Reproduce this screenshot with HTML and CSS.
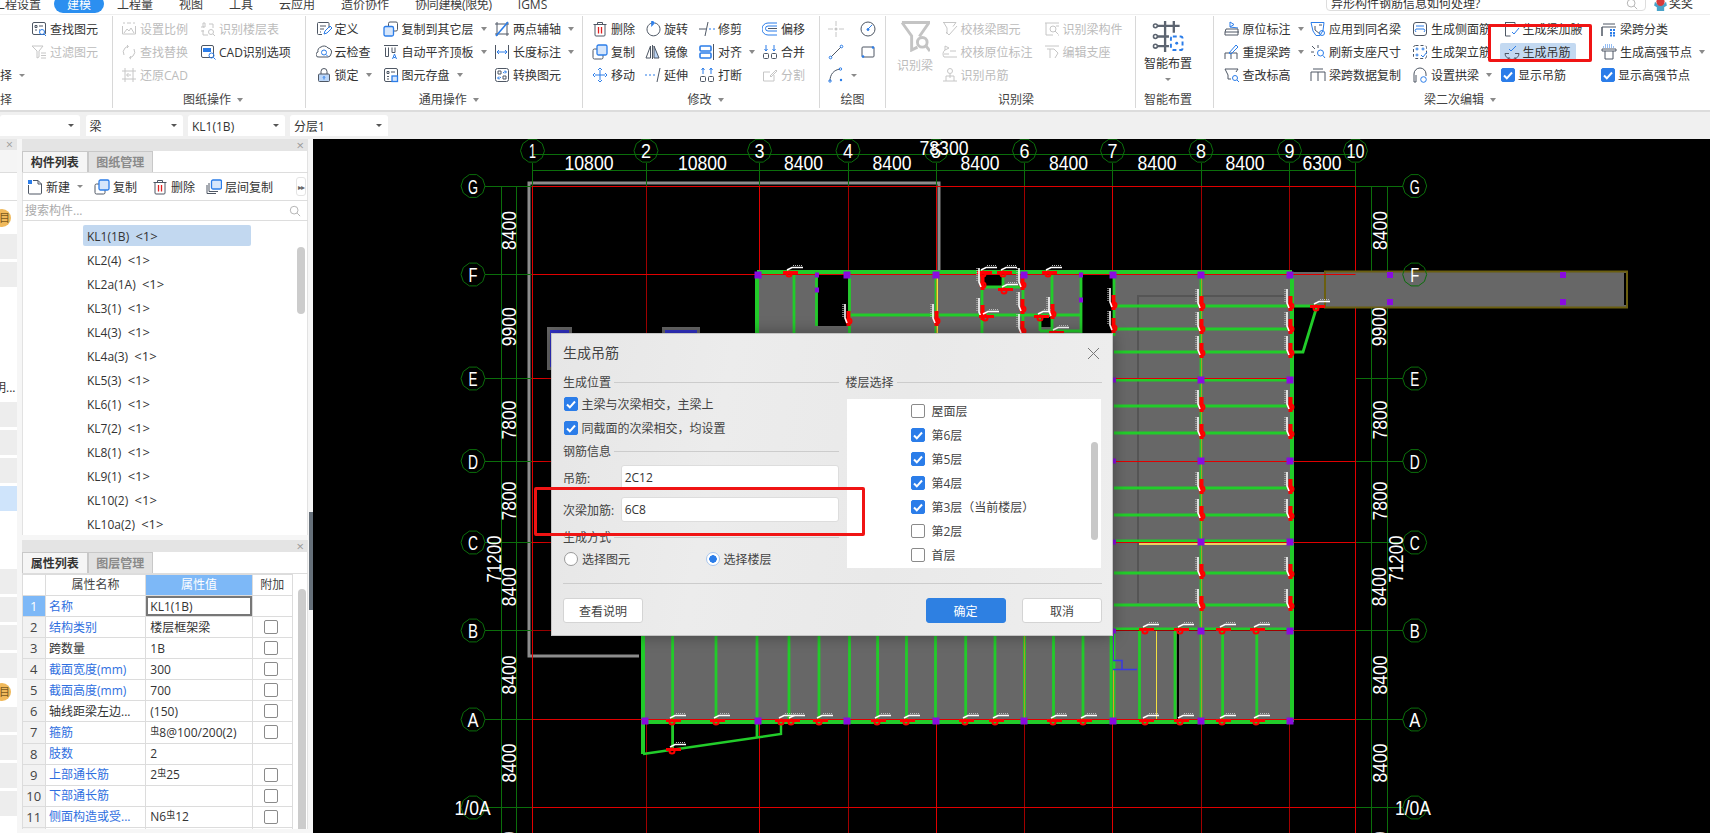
FILE: index.html
```html
<!DOCTYPE html>
<html lang="zh">
<head>
<meta charset="utf-8">
<title>生成吊筋</title>
<link rel="stylesheet" href="styles.css">
</head>
<body>
<svg class="sprite" width="0" height="0" aria-hidden="true">
<defs>
<symbol id="find" viewBox="0 0 16 16"><rect x="1.5" y="1.5" width="13" height="12" rx="1.5"/><path d="M4 4.5h2v2H4zM8 5h4M4 9h2M8 9h1"/><circle class="a" cx="11" cy="11" r="2.5"/><path class="a" d="M13 13l2 2"/></symbol>
<symbol id="filter" viewBox="0 0 16 16"><path d="M1 2h11L8 7v6l-2 1V7zM10 9h5M10 11.500h5M10 14h5"/></symbol>
<symbol id="scale" viewBox="0 0 16 16"><path d="M2 2h2M6 2h4M12 2h2M1.500 5v8h13V5"/><path d="M3 12l3-4 2 2 2-3 3 5"/></symbol>
<symbol id="ftable" viewBox="0 0 16 16"><path d="M3 2h2v4H3zM3 9v5h5M9 3h4v4"/><circle cx="11" cy="11" r="2.500"/><path d="M13 13l2 2M1 6h3M1 10h3"/></symbol>
<symbol id="replace" viewBox="0 0 16 16"><path d="M3 11a6 6 0 0 1 1-7l3-2M13 5a6 6 0 0 1-1 7l-3 2M6 1l1.500 1.500L6 4M10 12l-1.500 2L10 15"/></symbol>
<symbol id="cadopt" viewBox="0 0 16 16"><rect x="1.500" y="1.500" width="12" height="12" rx="1.500"/><path class="af n" d="M3 4h8v4H3z"/><circle class="a" cx="11.500" cy="11.500" r="2.500"/><path class="a" d="M13.500 13.500l2 2"/></symbol>
<symbol id="restore" viewBox="0 0 16 16"><path d="M1 4h14M1 12h14M4 1v14M12 1v14M10 8H6M7.500 6L5.500 8l2 2"/></symbol>
<symbol id="def" viewBox="0 0 16 16"><path d="M13 7V2.500a1 1 0 0 0-1-1H2.500a1 1 0 0 0-1 1v10a1 1 0 0 0 1 1H6M4 5h6M4 8h4M4 11h1"/><path class="a" d="M8 13l1-3 5-5 2 2-5 5z"/></symbol>
<symbol id="cloud" viewBox="0 0 16 16"><path d="M4 13H3a2.500 2.500 0 0 1-1-5 4 4 0 0 1 3-5 5 5 0 0 1 7 1 4 4 0 0 1 3 6 3.500 3.500 0 0 1-3 3z"/><circle class="a" cx="8" cy="8.500" r="2.500"/><path class="a" d="M10 10.500l2 2"/></symbol>
<symbol id="lock" viewBox="0 0 16 16"><path d="M5 7V4.500a3 3 0 0 1 6 0V7"/><rect class="afl" x="2.500" y="7" width="11" height="7.500" rx="1"/><path class="a" d="M8 9.500v3M7 10.500l1-1 1 1"/></symbol>
<symbol id="copylayer" viewBox="0 0 16 16"><rect x="5.500" y="1" width="9" height="9" rx="1.500"/><rect class="afs" x="1" y="5.500" width="9.500" height="9.500" rx="1.500"/></symbol>
<symbol id="topalign" viewBox="0 0 16 16"><path d="M1 1.500h14M2.500 3.500v9h3v-9M9 3.500v5h3v-5"/><path class="a" d="M9.500 15l2-5 2 5M10.500 13.500h2"/></symbol>
<symbol id="save" viewBox="0 0 16 16"><rect x="1.500" y="1.500" width="13" height="13" rx="1.500"/><path d="M4 4.500h2v2H4zM8 5h4M4 9.500h2M4 12h2"/><rect class="afs" x="9" y="9" width="5.500" height="5.500"/></symbol>
<symbol id="twopt" viewBox="0 0 16 16"><path d="M3 1v14M13 1v14M1 3h14M1 13h14"/><path class="a w" d="M2 15L14 1"/></symbol>
<symbol id="dim" viewBox="0 0 16 16"><path d="M1.500 1v14M14.500 1v14"/><path class="a" d="M3 8h10M5 6L3 8l2 2M11 6l2 2-2 2"/></symbol>
<symbol id="convert" viewBox="0 0 16 16"><rect x="1.500" y="1.500" width="13" height="13" rx="2"/><path d="M4 4h3v3H4zM9 9h3v3H9z"/><path class="a" d="M9 6a2.500 2.500 0 0 1 3-1M7 10a2.500 2.500 0 0 1-3 1M11 3.500L12.500 5 11 6.500M5 9.500L3.500 11 5 12.500"/></symbol>
<symbol id="trash" viewBox="0 0 16 16"><path d="M1.500 3.500h13M5.500 3.500V1.500h5v2M3 3.500V14a1 1 0 0 0 1 1h8a1 1 0 0 0 1-1V3.500"/><path class="r" d="M6.500 6v6.500M9.500 6v6.500"/></symbol>
<symbol id="copy" viewBox="0 0 16 16"><rect x="1" y="5" width="10" height="10" rx="1.500"/><rect class="afs" x="5" y="1" width="10" height="10" rx="1.500"/></symbol>
<symbol id="copy2" viewBox="0 0 16 16"><path d="M1 6v8.500h9M3 4v8.500h9"/><rect class="afs" x="5.500" y="1" width="10" height="9" rx="1.500"/></symbol>
<symbol id="move" viewBox="0 0 16 16"><path class="a" d="M8 3v10M3 8h10M6 3l2-2 2 2M6 13l2 2 2-2M3 6L1 8l2 2M13 6l2 2-2 2"/></symbol>
<symbol id="rotate" viewBox="0 0 16 16"><path d="M7 2a6.500 6.500 0 1 0 3 0"/><path class="a w" d="M7 0v4l2-2z"/></symbol>
<symbol id="mirror" viewBox="0 0 16 16"><path d="M5.500 2L1 14h4.500z"/><path class="afl" d="M9 2l5 12H9z"/><path d="M7.500 1v14"/></symbol>
<symbol id="extend" viewBox="0 0 16 16"><path class="a" d="M0 8h2M4 8h2M8 8h2"/><path d="M15 1l-3 14"/></symbol>
<symbol id="trim" viewBox="0 0 16 16"><path d="M9 1L6 15M0 8h7"/><path class="a" d="M10 8h2M14 8h2"/></symbol>
<symbol id="align" viewBox="0 0 16 16"><rect class="a w" x="1" y="2" width="11" height="5" rx="1"/><rect class="a w" x="1" y="9" width="11" height="5" rx="1"/><path d="M14.500 0v16"/></symbol>
<symbol id="breakb" viewBox="0 0 16 16"><rect x="1.500" y="9.500" width="5" height="5" rx="1"/><rect x="9.500" y="9.500" width="5" height="5" rx="1"/><path class="a" d="M4 1v6M12 1v6M2.500 3L4 1l1.500 2M10.500 3L12 1l1.500 2"/></symbol>
<symbol id="offset" viewBox="0 0 16 16"><path class="a" d="M15 2H6a5.500 5.500 0 0 0 0 12h9M15 5H6a2.500 2.500 0 0 0 0 5h9"/><path d="M15 7.500H6"/></symbol>
<symbol id="merge" viewBox="0 0 16 16"><rect x="1.500" y="9.500" width="5" height="5" rx="1"/><rect x="9.500" y="9.500" width="5" height="5" rx="1"/><path class="a" d="M4 1v6M12 1v6M2.500 5L4 7l1.500-2M10.500 5L12 7l1.500-2"/></symbol>
<symbol id="split" viewBox="0 0 16 16"><path d="M12 8v6H1.500V5H8M8 9l6-6 1 1-6 6z"/></symbol>
<symbol id="dotc" viewBox="0 0 16 16"><path d="M8 0v5M8 11v5M0 8h5M11 8h5"/><circle class="af n" cx="8" cy="8" r="1.500"/></symbol>
<symbol id="circ" viewBox="0 0 16 16"><circle cx="8" cy="8" r="7"/><path class="a" d="M8 8l4-4"/><circle class="af" cx="8" cy="8.500" r="1"/></symbol>
<symbol id="lin" viewBox="0 0 16 16"><path d="M3 13L13 3"/><circle class="a" cx="13.500" cy="2.500" r="1.300"/><circle class="a" cx="2.500" cy="13.500" r="1.300"/></symbol>
<symbol id="rct" viewBox="0 0 16 16"><rect x="2" y="3" width="12" height="10" rx="1"/><circle class="af n" cx="13" cy="3.500" r="1.300"/><circle class="af n" cx="3" cy="12.500" r="1.300"/></symbol>
<symbol id="arc" viewBox="0 0 16 16"><path d="M2 14C2 7 6 3 12 2"/><circle class="a" cx="2" cy="14" r="1.200"/><circle class="a" cx="12.500" cy="2" r="1.200"/><circle class="af n" cx="13" cy="13" r="1.200"/></symbol>
<symbol id="bigfilter" viewBox="0 0 30 32"><path class="h" d="M1 1.500h28L19 16M1 1.500l10 14V30l6-3"/><circle class="h" cx="22" cy="22" r="5"/><path class="h" d="M26 26l4 5"/></symbol>
<symbol id="chk1" viewBox="0 0 16 16"><path d="M1 1.500h13l-3 4M2 2l3 5v6"/><path d="M4 11l3 3 8-9"/></symbol>
<symbol id="chk2" viewBox="0 0 16 16"><path d="M3 2v4l4-2zM3 6a5 5 0 0 0-1 7h13M2 10h5M8 7h6"/></symbol>
<symbol id="hang" viewBox="0 0 16 16"><circle cx="8" cy="4" r="2.500"/><path d="M4 14V9h8v5M1 14h14M8 7v4"/></symbol>
<symbol id="part" viewBox="0 0 16 16"><path d="M1 2h14M2 2v12h7"/><circle cx="9" cy="8" r="3"/><path d="M11 10l3 3M12 5h3M14 14h1"/></symbol>
<symbol id="sup" viewBox="0 0 16 16"><path d="M1 2h14M3 5h7M6 5v9M10 5l4 4-3 5"/></symbol>
<symbol id="grid" viewBox="0 0 32 32"><path class="d" d="M3 5h25M3 16h14M3 26h14M13 0v32M22 0v12"/><circle class="d1" cx="3" cy="5" r="2"/><circle class="d1" cx="3" cy="16" r="2"/><circle class="d1" cx="3" cy="26" r="2"/><rect class="a d2" x="19" y="16" width="12" height="14" rx="2" stroke-dasharray="4 3"/><circle class="af n" cx="25" cy="23" r="1.500"/></symbol>
<symbol id="orig" viewBox="0 0 16 16"><path class="a" d="M6 1v5l4-2.500zM6 6l8 1"/><path d="M2 8h12v6H1v-3zM1 11h14"/></symbol>
<symbol id="redo" viewBox="0 0 16 16"><path d="M1 15V9h12v6M7 9v6"/><path class="a" d="M5 9l7-8 2 2-7 7z"/></symbol>
<symbol id="chkh" viewBox="0 0 16 16"><path d="M1 2h13l-2 3M1 2l3 6v4h3"/><circle class="a" cx="11" cy="11" r="2.500"/><path class="a" d="M13 13l2 2"/></symbol>
<symbol id="apply" viewBox="0 0 16 16"><path class="a" d="M1 1.500h13l-1 8-3 5H6L3 10z"/><path d="M5 5v4l5 4M9 4h3"/><circle class="a" cx="12" cy="12" r="2.500"/></symbol>
<symbol id="fresh" viewBox="0 0 16 16"><path d="M2 2l3 3M8 1v3M1 8h3M4 12l1-1"/><circle class="a" cx="10.500" cy="9" r="3"/><path class="a" d="M13 11.500l2 2.500"/></symbol>
<symbol id="scopy" viewBox="0 0 16 16"><path d="M1 5h14M3 2h10M1 14V5M15 14V5M8 5v9"/></symbol>
<symbol id="side" viewBox="0 0 16 16"><rect x="1.500" y="1.500" width="13" height="13" rx="2.500"/><path class="a" d="M4 5h8M4 8h8"/><path class="a" d="M4 8a2 2 0 0 0 0 3M12 8a2 2 0 0 1 0 3"/></symbol>
<symbol id="stand" viewBox="0 0 16 16"><rect x="1.500" y="1.500" width="13" height="13" rx="2" stroke-dasharray="3 2"/><circle class="a" cx="5" cy="5" r="1"/><circle class="a" cx="11" cy="5" r="1"/><circle class="a" cx="5" cy="11" r="1"/><path class="a" d="M9 11l2 2 4-5"/></symbol>
<symbol id="archb" viewBox="0 0 16 16"><path d="M2 15V7a6 6 0 0 1 12 0v2M2 15h2V8"/><circle class="a" cx="11.500" cy="12.500" r="2.800"/></symbol>
<symbol id="haunch" viewBox="0 0 16 16"><path d="M1 1.500h10M1.500 1.500V15h5M11 1.500V6"/><path class="a" d="M8 11l2 2 5-6"/></symbol>
<symbol id="hangb" viewBox="0 0 16 16"><path d="M1 9.500a7 6 0 0 0 14 0M1 9.500h4M11 9.500h4M5 13v2M11 13v2"/><path class="a" d="M5 5l2 2 5-5"/></symbol>
<symbol id="classify" viewBox="0 0 16 16"><path d="M2 3h12M1 15V6h14M1 6v9"/><path class="a d3" d="M9 9h2M12 9h2M9 12h2M12 12h2M9 14.500h2M12 14.500h2"/></symbol>
<symbol id="node" viewBox="0 0 16 16"><path class="a" d="M4 1h8M2 3h12" stroke-dasharray="1 1"/><path d="M1 5h14v2H1zM4 7v8h8V7"/></symbol>
<symbol id="ck" viewBox="0 0 14 14"><path class="ckp" d="M3 7.500l2.800 2.800L11 4.500"/></symbol>
<symbol id="mag" viewBox="0 0 14 14"><circle cx="6" cy="6" r="4.500"/><path d="M9.500 9.500L13 13"/></symbol>
<symbol id="newdoc" viewBox="0 0 16 16"><path d="M6 1.500h5l3.500 3.500v9a1 1 0 0 1-1 1h-11a1 1 0 0 1-1-1V6"/><path d="M11 1.500V5h3.500"/><path class="af n" d="M1 1h4v4H1z"/></symbol>
</defs>
</svg>

<header class="tabbar">
  <div class="tabs">
    <span class="tab">工程设置</span>
    <span class="tab active">建模</span>
    <span class="tab">工程量</span>
    <span class="tab">视图</span>
    <span class="tab">工具</span>
    <span class="tab">云应用</span>
    <span class="tab">造价协作</span>
    <span class="tab tab-long">协同建模(限免)</span>
    <span class="tab">IGMS</span>
  </div>
  <div class="search-top"><span>异形构件钢筋信息如何处理?</span><svg class="ic mag"><use href="#mag"/></svg></div>
  <div class="user">
    <svg class="avatar" viewBox="0 0 14 12"><path class="av-b" d="M1 2l3 3h6l3-3 1 4-3 2v4H3V8L0 6z"/><circle class="av-r" cx="7" cy="2" r="4.500"/></svg>
    <span>奖奖</span>
  </div>
</header>

<section class="ribbon">
  <div class="grp g0">
    <div class="cols">
      <div class="it"></div><div class="it"></div>
      <div class="it"><span>择</span><i class="ar ar-sm"></i></div>
      <div class="it"><svg class="ic"><use href="#find"/></svg><span>查找图元</span></div>
      <div class="it off"><svg class="ic"><use href="#filter"/></svg><span>过滤图元</span></div>
    </div>
    <div class="glabel left">择</div>
  </div>
  <div class="grp g1">
    <div class="cols">
      <div class="it off"><svg class="ic"><use href="#scale"/></svg><span>设置比例</span></div>
      <div class="it off"><svg class="ic"><use href="#replace"/></svg><span>查找替换</span></div>
      <div class="it off"><svg class="ic"><use href="#restore"/></svg><span>还原CAD</span></div>
      <div class="it off"><svg class="ic"><use href="#ftable"/></svg><span>识别楼层表</span></div>
      <div class="it"><svg class="ic"><use href="#cadopt"/></svg><span>CAD识别选项</span></div>
    </div>
    <div class="glabel">图纸操作<i class="ar"></i></div>
  </div>
  <div class="grp g2">
    <div class="cols">
      <div class="it"><svg class="ic"><use href="#def"/></svg><span>定义</span></div>
      <div class="it"><svg class="ic"><use href="#cloud"/></svg><span>云检查</span></div>
      <div class="it"><svg class="ic"><use href="#lock"/></svg><span>锁定</span><i class="ar"></i></div>
      <div class="it"><svg class="ic"><use href="#copylayer"/></svg><span>复制到其它层</span><i class="ar"></i></div>
      <div class="it"><svg class="ic"><use href="#topalign"/></svg><span>自动平齐顶板</span><i class="ar"></i></div>
      <div class="it"><svg class="ic"><use href="#save"/></svg><span>图元存盘</span><i class="ar"></i></div>
      <div class="it"><svg class="ic"><use href="#twopt"/></svg><span>两点辅轴</span><i class="ar"></i></div>
      <div class="it"><svg class="ic"><use href="#dim"/></svg><span>长度标注</span><i class="ar"></i></div>
      <div class="it"><svg class="ic"><use href="#convert"/></svg><span>转换图元</span></div>
    </div>
    <div class="glabel">通用操作<i class="ar"></i></div>
  </div>
  <div class="grp g3">
    <div class="cols">
      <div class="it"><svg class="ic"><use href="#trash"/></svg><span>删除</span></div>
      <div class="it"><svg class="ic"><use href="#copy"/></svg><span>复制</span></div>
      <div class="it"><svg class="ic"><use href="#move"/></svg><span>移动</span></div>
      <div class="it"><svg class="ic"><use href="#rotate"/></svg><span>旋转</span></div>
      <div class="it"><svg class="ic"><use href="#mirror"/></svg><span>镜像</span></div>
      <div class="it"><svg class="ic"><use href="#extend"/></svg><span>延伸</span></div>
      <div class="it"><svg class="ic"><use href="#trim"/></svg><span>修剪</span></div>
      <div class="it"><svg class="ic"><use href="#align"/></svg><span>对齐</span><i class="ar"></i></div>
      <div class="it"><svg class="ic"><use href="#breakb"/></svg><span>打断</span></div>
      <div class="it"><svg class="ic"><use href="#offset"/></svg><span>偏移</span></div>
      <div class="it"><svg class="ic"><use href="#merge"/></svg><span>合并</span></div>
      <div class="it off"><svg class="ic"><use href="#split"/></svg><span>分割</span></div>
    </div>
    <div class="glabel">修改<i class="ar"></i></div>
  </div>
  <div class="grp g4">
    <div class="cols">
      <div class="it off"><svg class="ic"><use href="#dotc"/></svg></div>
      <div class="it"><svg class="ic"><use href="#lin"/></svg></div>
      <div class="it"><svg class="ic"><use href="#arc"/></svg><i class="ar ar-sm"></i></div>
      <div class="it"><svg class="ic"><use href="#circ"/></svg></div>
      <div class="it"><svg class="ic"><use href="#rct"/></svg></div>
    </div>
    <div class="glabel">绘图</div>
  </div>
  <div class="grp g5">
    <div class="cols">
      <div class="big off"><svg class="bigic"><use href="#bigfilter"/></svg><span>识别梁</span></div>
      <div class="it off"><svg class="ic"><use href="#chk1"/></svg><span>校核梁图元</span></div>
      <div class="it off"><svg class="ic"><use href="#chk2"/></svg><span>校核原位标注</span></div>
      <div class="it off"><svg class="ic"><use href="#hang"/></svg><span>识别吊筋</span></div>
      <div class="it off"><svg class="ic"><use href="#part"/></svg><span>识别梁构件</span></div>
      <div class="it off"><svg class="ic"><use href="#sup"/></svg><span>编辑支座</span></div>
    </div>
    <div class="glabel">识别梁</div>
  </div>
  <div class="grp g6">
    <div class="cols">
      <div class="big big-smart"><svg class="bigic"><use href="#grid"/></svg><span>智能布置</span><i class="ar ar-sm"></i></div>
    </div>
    <div class="glabel">智能布置</div>
  </div>
  <div class="grp g7">
    <div class="cols">
      <div class="it"><svg class="ic"><use href="#orig"/></svg><span>原位标注</span><i class="ar"></i></div>
      <div class="it"><svg class="ic"><use href="#redo"/></svg><span>重提梁跨</span><i class="ar"></i></div>
      <div class="it"><svg class="ic"><use href="#chkh"/></svg><span>查改标高</span></div>
      <div class="it"><svg class="ic"><use href="#apply"/></svg><span>应用到同名梁</span></div>
      <div class="it"><svg class="ic"><use href="#fresh"/></svg><span>刷新支座尺寸</span></div>
      <div class="it"><svg class="ic"><use href="#scopy"/></svg><span>梁跨数据复制</span></div>
      <div class="it"><svg class="ic"><use href="#side"/></svg><span>生成侧面筋</span></div>
      <div class="it"><svg class="ic"><use href="#stand"/></svg><span>生成架立筋</span></div>
      <div class="it"><svg class="ic"><use href="#archb"/></svg><span>设置拱梁</span><i class="ar"></i></div>
      <div class="it pad"><svg class="ic"><use href="#haunch"/></svg><span>生成梁加腋</span></div>
      <div class="it pad"><div class="sel-bg"><svg class="ic"><use href="#hangb"/></svg><span>生成吊筋</span></div></div>
      <div class="it pad-cb"><b class="cb on"><svg><use href="#ck"/></svg></b><span>显示吊筋</span></div>
      <div class="it"><svg class="ic"><use href="#classify"/></svg><span>梁跨分类</span></div>
      <div class="it"><svg class="ic"><use href="#node"/></svg><span>生成高强节点</span><i class="ar"></i></div>
      <div class="it"><b class="cb on"><svg><use href="#ck"/></svg></b><span>显示高强节点</span></div>
    </div>
    <div class="glabel g7-label">梁二次编辑<i class="ar"></i></div>
  </div>
</section>

<section class="subbar">
  <div class="combo c1"><span></span><i class="ar ar-dk"></i></div>
  <div class="combo c2"><span>梁</span><i class="ar ar-dk"></i></div>
  <div class="combo c3"><span>KL1(1B)</span><i class="ar ar-dk"></i></div>
  <div class="combo c4"><span>分层1</span><i class="ar ar-dk"></i></div>
</section>

<main class="main">
  <nav class="nav">
    <div class="n-strip">×</div>
    <div class="n-tab"></div>
    <div class="n-tool"></div>
    <div class="n-a"><div class="dot">目</div></div>
    <div class="band"></div>
    <div class="band"></div>
    <div class="n-b"><span>明...</span></div>
    <div class="band"></div>
    <div class="band"></div>
    <div class="band"></div>
    <div class="band band-sel"></div>
    <div class="n-c"></div>
    <div class="band"></div>
    <div class="band"></div>
    <div class="band"></div>
    <div class="band"></div>
    <div class="n-d"><div class="dot">目</div></div>
    <div class="band"></div>
    <div class="band"></div>
    <div class="band"></div>
    <div class="band"></div>
  </nav>

  <div class="panels">
    <section class="panel panel-a">
      <div class="p-strip">×</div>
      <div class="p-tabs"><span class="p-tab on">构件列表</span><span class="p-tab">图纸管理</span></div>
      <div class="p-tools">
        <div class="tb"><svg class="ic"><use href="#newdoc"/></svg><span>新建</span><i class="ar ar-sm"></i></div>
        <div class="tb"><svg class="ic"><use href="#copy"/></svg><span>复制</span></div>
        <div class="tb"><svg class="ic"><use href="#trash"/></svg><span>删除</span></div>
        <div class="tb"><svg class="ic"><use href="#copy2"/></svg><span>层间复制</span></div>
        <div class="more">▸▸</div>
      </div>
      <div class="p-search"><span>搜索构件...</span><svg class="ic mag"><use href="#mag"/></svg></div>
      <div class="p-list">
        <div class="row sel">KL1(1B)  <em>&lt;1&gt;</em></div>
        <div class="row">KL2(4)  <em>&lt;1&gt;</em></div>
        <div class="row">KL2a(1A)  <em>&lt;1&gt;</em></div>
        <div class="row">KL3(1)  <em>&lt;1&gt;</em></div>
        <div class="row">KL4(3)  <em>&lt;1&gt;</em></div>
        <div class="row">KL4a(3)  <em>&lt;1&gt;</em></div>
        <div class="row">KL5(3)  <em>&lt;1&gt;</em></div>
        <div class="row">KL6(1)  <em>&lt;1&gt;</em></div>
        <div class="row">KL7(2)  <em>&lt;1&gt;</em></div>
        <div class="row">KL8(1)  <em>&lt;1&gt;</em></div>
        <div class="row">KL9(1)  <em>&lt;1&gt;</em></div>
        <div class="row">KL10(2)  <em>&lt;1&gt;</em></div>
        <div class="row">KL10a(2)  <em>&lt;1&gt;</em></div>
        <div class="thumb"></div>
      </div>
    </section>
    <section class="panel panel-b">
      <div class="p-strip">×</div>
      <div class="p-tabs"><span class="p-tab on">属性列表</span><span class="p-tab">图层管理</span></div>
      <div class="p-tablewrap">
        <table class="props">
          <colgroup><col class="c-i"><col class="c-n"><col class="c-v"><col class="c-x"></colgroup>
          <tr class="head"><th></th><th>属性名称</th><th class="hv">属性值</th><th>附加</th></tr>
          <tr><td class="idx hv">1</td><td class="bl">名称</td><td class="val focus">KL1(1B)</td><td></td></tr>
          <tr><td class="idx">2</td><td class="bl">结构类别</td><td class="val">楼层框架梁</td><td><b class="cb"></b></td></tr>
          <tr><td class="idx">3</td><td>跨数量</td><td class="val">1B</td><td><b class="cb"></b></td></tr>
          <tr><td class="idx">4</td><td class="bl">截面宽度(mm)</td><td class="val">300</td><td><b class="cb"></b></td></tr>
          <tr><td class="idx">5</td><td class="bl">截面高度(mm)</td><td class="val">700</td><td><b class="cb"></b></td></tr>
          <tr><td class="idx">6</td><td>轴线距梁左边...</td><td class="val">(150)</td><td><b class="cb"></b></td></tr>
          <tr><td class="idx">7</td><td class="bl">箍筋</td><td class="val"><span class="rb">虫</span>8@100/200(2)</td><td><b class="cb"></b></td></tr>
          <tr><td class="idx">8</td><td class="bl">肢数</td><td class="val">2</td><td></td></tr>
          <tr><td class="idx">9</td><td class="bl">上部通长筋</td><td class="val">2<span class="rb">虫</span>25</td><td><b class="cb"></b></td></tr>
          <tr><td class="idx">10</td><td class="bl">下部通长筋</td><td class="val"></td><td><b class="cb"></b></td></tr>
          <tr><td class="idx">11</td><td class="bl">侧面构造或受...</td><td class="val">N6<span class="rb">虫</span>12</td><td><b class="cb"></b></td></tr>
          <tr><td class="idx">12</td><td class="bl">拉筋</td><td class="val">1<span class="rb">虫</span>6</td><td><b class="cb"></b></td></tr>
        </table>
        <div class="track"><div class="track-thumb"></div></div>
      </div>
    </section>
  </div>

  <div class="split"><div class="handle"></div></div>

  <div class="canvas">
    <svg class="cad" viewBox="313 139 1397 694" width="1397" height="694">
      <defs>
        <polygon id="bb" class="bub" points="12,0 9.700,7 3.700,11.400 -3.700,11.400 -9.700,7 -12,0 -9.700,-7 -3.700,-11.400 3.700,-11.400 9.700,-7"/>
        <g id="hb">
          <path class="m-r" d="M-6 1h15v3H-6z"/>
          <circle class="m-ring" cx="0" cy="4" r="2.500"/>
          <path class="m-w" d="M-2 0L3-2.500H14"/>
          <path class="m-t" d="M4-4.500H14"/>
        </g>
        <g id="hv">
          <path class="m-r" d="M-1.500-7h4V8h-4z"/>
          <circle class="m-ring" cx="1" cy="3" r="2.500"/>
          <path class="m-w" d="M-3-14V0L-1 5"/>
          <path class="m-t" d="M-5-14V-1"/>
        </g>
        <rect id="pp" class="pur" x="-3.500" y="-3.500" width="7" height="7"/>
        <rect id="ps" class="pur" x="-2" y="-2.500" width="4" height="5"/>
      </defs>

      <path class="outline" d="M639 656H529V183H939V273"/>
      <path class="blk" d="M547 327h25v40h-25z"/>
      <rect class="blue" x="548.500" y="328.500" width="22" height="40"/>
      <rect class="blue" x="663.500" y="328.500" width="35" height="20"/>

      <!-- grid axes -->
      <path class="ax-g" d="M532 154.500H1355.500M532 170.500H1355.500M532.500 163V186M646.500 163V186M759.500 163V186M848.500 163V186M936.500 163V186M1024.500 163V186M1112.500 163V186M1201.500 163V186M1289.500 163V186M1355.500 163V186"/>
      <path class="ax-g" d="M485 186.500H532M485 274.500H532M485 378.500H532M485 461.500H532M485 542.500H532M485 630.500H532M485 719.500H532M485 807.500H532M1355.500 186.500H1403M1355.500 274.500H1403M1355.500 378.500H1403M1355.500 461.500H1403M1355.500 542.500H1403M1355.500 630.500H1403M1355.500 719.500H1403M1355.500 807.500H1403"/>
      <path class="ax-g" d="M501.500 186V833M516.500 186V833M1371.500 186V833M1387.500 186V833"/>
      <path class="ax-r" d="M532.500 186V833M759.500 186V833M936.500 186V833M1112.500 186V833M1355.500 186V833"/>
      <path class="ax-d" d="M646.500 186V833M848.500 186V833M1024.500 186V833M1201.500 186V833M1289.500 186V833"/>
      <path class="ax-r" d="M532 186.500H1355.500"/>

      <!-- building -->
      <path class="bld" d="M757 272H1292V722H643V600H757z"/>
      <rect class="bld" x="1292" y="272" width="33" height="34"/>
      <rect class="beam" x="1325" y="271.500" width="302" height="36"/>
      <path class="blk" d="M1624 273h2v32h-2z"/>
      <path class="blk" d="M817.500 274H848V326H817.500zM983 274H1003V286.500H983zM1040 317H1051V327H1040zM1081 274H1113V334H1081z"/>
      <path class="dk" d="M1285 296H1138V603"/>
      <path class="ylw" d="M1139 544H1287"/>

      <path class="gr w4" d="M757 272H1292M643 722H1292M757 272V336M1292 272V722M643 636V754"/>
      <path class="gr" d="M794 274V336M816.500 274V326M849.500 274V336M936 274V336M982 274V336M1003 274V287M1023 274V336M1052 274V336M1081 274V336M1114 274V336M1201 274V630M1114 630V720M1201 630V720"/>
      <path class="gr" d="M849 315H1081M982 287H1023M1040 317V331M1040 331H1081"/>
      <path class="gr" d="M1114 306H1320M1114 329H1292M1114 352H1303L1317 306M1114 380H1292M1114 406H1292M1114 433H1292M1114 488H1292M1114 515H1292M1114 541H1292M1114 573H1292M1114 605H1292M1114 629H1292"/>
      <path class="gr" d="M672.600 636V748M716 636V722M757 636V737M789 636V722M819 636V722M849.500 636V722M877.600 636V722M906.500 636V722M935.500 636V722M965.700 636V722M995 636V722M1024.500 636V722M1053.500 636V722M1083 636V722M1111 636V722M1139.500 630V722M1175 630V722M1222.600 630V722M1256.800 630V722"/>
      <path class="gr w2" d="M643 754L781 734V722"/>
      <path class="blk" d="M1177 630h2v90h-2z"/>
      <path class="ylw thin" d="M1156.500 630V720M937.500 274V336"/>
      <path class="org" d="M1113.500 669V720"/>
      <path class="pl" d="M1113.500 630V660"/>
      <path class="bl" d="M1113 660.500H1122V669.500H1113M1122 669.500H1137"/>
      <path class="olv" d="M1201.500 274V722M936.500 274V336M1024.500 636V720M1114 461.500H1292"/>

      <path class="ax-r thin" d="M532 274.500H1355.500M532 378.500H1292M532 461.500H1355.500M532 542.500H1355.500M532 719.500H1355.500M532 807.500H1355.500"/>
      <path class="ax-d" d="M532 630.500H1355.500"/>

      <!-- generated bars -->
      <use href="#hb" x="789" y="270"/><use href="#hb" x="983" y="270"/><use href="#hb" x="1003" y="270"/><use href="#hb" x="1048" y="270"/>
      <use href="#hv" x="982" y="282"/><use href="#hv" x="1022" y="282"/><use href="#hb" x="1004" y="287"/>
      <use href="#hv" x="982" y="312"/><use href="#hb" x="985" y="314"/><use href="#hv" x="1022" y="306"/><use href="#hv" x="1022" y="328"/>
      <use href="#hb" x="1040" y="314"/><use href="#hv" x="1052" y="311"/><use href="#hb" x="1055" y="330"/>
      <use href="#hv" x="848" y="318"/><use href="#hv" x="936" y="318"/>
      <use href="#hv" x="1113" y="302"/><use href="#hv" x="1113" y="325"/><use href="#hb" x="1316" y="304"/>
      <use href="#hv" x="1201" y="303"/><use href="#hv" x="1201" y="326"/><use href="#hv" x="1201" y="350"/><use href="#hv" x="1201" y="404"/><use href="#hv" x="1201" y="431"/><use href="#hv" x="1201" y="486"/><use href="#hv" x="1201" y="513"/><use href="#hv" x="1201" y="571"/><use href="#hv" x="1201" y="603"/>
      <use href="#hv" x="1290" y="303"/><use href="#hv" x="1290" y="326"/><use href="#hv" x="1290" y="350"/><use href="#hv" x="1290" y="404"/><use href="#hv" x="1290" y="431"/><use href="#hv" x="1290" y="486"/><use href="#hv" x="1290" y="513"/><use href="#hv" x="1290" y="571"/><use href="#hv" x="1290" y="603"/>
      <use href="#hb" x="1145" y="627"/><use href="#hb" x="1180" y="627"/><use href="#hb" x="1222" y="627"/><use href="#hb" x="1256" y="627"/>
      <use href="#hb" x="672" y="718"/><use href="#hb" x="716" y="718"/><use href="#hb" x="781" y="718"/><use href="#hb" x="791" y="718"/><use href="#hb" x="819" y="718"/><use href="#hb" x="877" y="718"/><use href="#hb" x="906" y="718"/><use href="#hb" x="965" y="718"/><use href="#hb" x="995" y="718"/><use href="#hb" x="1053" y="718"/><use href="#hb" x="1083" y="718"/><use href="#hb" x="1145" y="718"/><use href="#hb" x="1180" y="718"/><use href="#hb" x="1222" y="718"/><use href="#hb" x="1256" y="718"/>
      <use href="#hb" x="672" y="747"/>

      <!-- columns -->
      <use href="#pp" x="758" y="275"/><use href="#ps" x="817" y="275"/><use href="#pp" x="847" y="275"/><use href="#pp" x="936" y="275"/><use href="#pp" x="1024" y="275"/><use href="#ps" x="1081" y="275"/><use href="#ps" x="1081" y="300"/><use href="#pp" x="1113" y="275"/><use href="#pp" x="1201" y="275"/><use href="#pp" x="1290" y="275"/>
      <use href="#ps" x="817" y="290"/><use href="#ps" x="1114" y="380"/><use href="#pp" x="1201" y="380"/><use href="#pp" x="1290" y="380"/>
      <use href="#ps" x="1114" y="461"/><use href="#pp" x="1201" y="461"/><use href="#pp" x="1290" y="461"/>
      <use href="#ps" x="1114" y="542"/><use href="#pp" x="1201" y="542"/><use href="#pp" x="1290" y="542"/>
      <use href="#ps" x="1114" y="631"/><use href="#pp" x="1201" y="631"/><use href="#pp" x="1290" y="631"/>
      <use href="#pp" x="645" y="721"/><use href="#pp" x="758" y="721"/><use href="#pp" x="847" y="721"/><use href="#pp" x="936" y="721"/><use href="#pp" x="1024" y="721"/><use href="#pp" x="1113" y="721"/><use href="#pp" x="1201" y="721"/><use href="#pp" x="1290" y="721"/>
      <rect class="pur" x="1387" y="272" width="6" height="6"/><rect class="pur" x="1387" y="299" width="6" height="6"/><rect class="pur" x="1560" y="272" width="6" height="6"/><rect class="pur" x="1560" y="299" width="6" height="6"/>

      <!-- bubbles -->
      <use href="#bb" x="532.500" y="150.700"/><use href="#bb" x="646" y="150.700"/><use href="#bb" x="759.500" y="150.700"/><use href="#bb" x="848" y="150.700"/><use href="#bb" x="936" y="150.700"/><use href="#bb" x="1024.500" y="150.700"/><use href="#bb" x="1112.500" y="150.700"/><use href="#bb" x="1201" y="150.700"/><use href="#bb" x="1289.500" y="150.700"/><use href="#bb" x="1355.500" y="150.700"/>
      <use href="#bb" x="473" y="186"/><use href="#bb" x="473" y="274.500"/><use href="#bb" x="473" y="378.500"/><use href="#bb" x="473" y="461"/><use href="#bb" x="473" y="542.500"/><use href="#bb" x="473" y="630.500"/><use href="#bb" x="473" y="719.500"/><use href="#bb" x="473" y="807.500"/>
      <use href="#bb" x="1414.700" y="186"/><use href="#bb" x="1414.700" y="274.500"/><use href="#bb" x="1414.700" y="378.500"/><use href="#bb" x="1414.700" y="461"/><use href="#bb" x="1414.700" y="542.500"/><use href="#bb" x="1414.700" y="630.500"/><use href="#bb" x="1414.700" y="719.500"/><use href="#bb" x="1414.700" y="807.500"/>

      <text class="lb" x="532.500" y="158" textLength="7" lengthAdjust="spacingAndGlyphs">1</text>
      <text class="lb" x="646" y="158" textLength="10" lengthAdjust="spacingAndGlyphs">2</text>
      <text class="lb" x="759.500" y="158" textLength="10" lengthAdjust="spacingAndGlyphs">3</text>
      <text class="lb" x="848" y="158" textLength="10" lengthAdjust="spacingAndGlyphs">4</text>
      <text class="lb" x="936" y="158" textLength="10" lengthAdjust="spacingAndGlyphs">5</text>
      <text class="lb" x="1024.500" y="158" textLength="10" lengthAdjust="spacingAndGlyphs">6</text>
      <text class="lb" x="1112.500" y="158" textLength="10" lengthAdjust="spacingAndGlyphs">7</text>
      <text class="lb" x="1201" y="158" textLength="10" lengthAdjust="spacingAndGlyphs">8</text>
      <text class="lb" x="1289.500" y="158" textLength="10" lengthAdjust="spacingAndGlyphs">9</text>
      <text class="lb" x="1355.500" y="158" textLength="18" lengthAdjust="spacingAndGlyphs">10</text>

      <text class="lb" x="589" y="170" textLength="49" lengthAdjust="spacingAndGlyphs">10800</text>
      <text class="lb" x="702.400" y="170" textLength="49" lengthAdjust="spacingAndGlyphs">10800</text>
      <text class="lb" x="803.500" y="170" textLength="39" lengthAdjust="spacingAndGlyphs">8400</text>
      <text class="lb" x="892" y="170" textLength="39" lengthAdjust="spacingAndGlyphs">8400</text>
      <text class="lb" x="980" y="170" textLength="39" lengthAdjust="spacingAndGlyphs">8400</text>
      <text class="lb" x="1068.500" y="170" textLength="39" lengthAdjust="spacingAndGlyphs">8400</text>
      <text class="lb" x="1157" y="170" textLength="39" lengthAdjust="spacingAndGlyphs">8400</text>
      <text class="lb" x="1245" y="170" textLength="39" lengthAdjust="spacingAndGlyphs">8400</text>
      <text class="lb" x="1322" y="170" textLength="39" lengthAdjust="spacingAndGlyphs">6300</text>
      <text class="lb" x="944" y="155" textLength="49" lengthAdjust="spacingAndGlyphs">78300</text>

      <text class="lb" x="473" y="193.500" textLength="10" lengthAdjust="spacingAndGlyphs">G</text>
      <text class="lb" x="473" y="282" textLength="9" lengthAdjust="spacingAndGlyphs">F</text>
      <text class="lb" x="473" y="386" textLength="9" lengthAdjust="spacingAndGlyphs">E</text>
      <text class="lb" x="473" y="468.500" textLength="10" lengthAdjust="spacingAndGlyphs">D</text>
      <text class="lb" x="473" y="550" textLength="10" lengthAdjust="spacingAndGlyphs">C</text>
      <text class="lb" x="473" y="638" textLength="10" lengthAdjust="spacingAndGlyphs">B</text>
      <text class="lb" x="473" y="727" textLength="11" lengthAdjust="spacingAndGlyphs">A</text>
      <text class="lb" x="472.600" y="815" textLength="36" lengthAdjust="spacingAndGlyphs">1/0A</text>
      <text class="lb" x="1414.700" y="193.500" textLength="10" lengthAdjust="spacingAndGlyphs">G</text>
      <text class="lb" x="1414.700" y="282" textLength="9" lengthAdjust="spacingAndGlyphs">F</text>
      <text class="lb" x="1414.700" y="386" textLength="9" lengthAdjust="spacingAndGlyphs">E</text>
      <text class="lb" x="1414.700" y="468.500" textLength="10" lengthAdjust="spacingAndGlyphs">D</text>
      <text class="lb" x="1414.700" y="550" textLength="10" lengthAdjust="spacingAndGlyphs">C</text>
      <text class="lb" x="1414.700" y="638" textLength="10" lengthAdjust="spacingAndGlyphs">B</text>
      <text class="lb" x="1414.700" y="727" textLength="11" lengthAdjust="spacingAndGlyphs">A</text>
      <text class="lb" x="1413" y="815" textLength="36" lengthAdjust="spacingAndGlyphs">1/0A</text>

      <text class="lb" transform="rotate(-90 516 230.500)" x="516" y="230.500" textLength="39" lengthAdjust="spacingAndGlyphs">8400</text>
      <text class="lb" transform="rotate(-90 516 326.700)" x="516" y="326.700" textLength="39" lengthAdjust="spacingAndGlyphs">9900</text>
      <text class="lb" transform="rotate(-90 516 420)" x="516" y="420" textLength="39" lengthAdjust="spacingAndGlyphs">7800</text>
      <text class="lb" transform="rotate(-90 516 501)" x="516" y="501" textLength="39" lengthAdjust="spacingAndGlyphs">7800</text>
      <text class="lb" transform="rotate(-90 516 586.700)" x="516" y="586.700" textLength="39" lengthAdjust="spacingAndGlyphs">8400</text>
      <text class="lb" transform="rotate(-90 516 675)" x="516" y="675" textLength="39" lengthAdjust="spacingAndGlyphs">8400</text>
      <text class="lb" transform="rotate(-90 516 763)" x="516" y="763" textLength="39" lengthAdjust="spacingAndGlyphs">8400</text>
      <text class="lb" transform="rotate(-90 516 851)" x="516" y="851" textLength="39" lengthAdjust="spacingAndGlyphs">8400</text>
      <text class="lb" transform="rotate(-90 500.500 559)" x="500.500" y="559" textLength="47" lengthAdjust="spacingAndGlyphs">71200</text>
      <text class="lb" transform="rotate(-90 1386.500 230.500)" x="1386.500" y="230.500" textLength="39" lengthAdjust="spacingAndGlyphs">8400</text>
      <text class="lb" transform="rotate(-90 1386.500 326.700)" x="1386.500" y="326.700" textLength="39" lengthAdjust="spacingAndGlyphs">9900</text>
      <text class="lb" transform="rotate(-90 1386.500 420)" x="1386.500" y="420" textLength="39" lengthAdjust="spacingAndGlyphs">7800</text>
      <text class="lb" transform="rotate(-90 1386.500 501)" x="1386.500" y="501" textLength="39" lengthAdjust="spacingAndGlyphs">7800</text>
      <text class="lb" transform="rotate(-90 1386.500 586.700)" x="1386.500" y="586.700" textLength="39" lengthAdjust="spacingAndGlyphs">8400</text>
      <text class="lb" transform="rotate(-90 1386.500 675)" x="1386.500" y="675" textLength="39" lengthAdjust="spacingAndGlyphs">8400</text>
      <text class="lb" transform="rotate(-90 1386.500 763)" x="1386.500" y="763" textLength="39" lengthAdjust="spacingAndGlyphs">8400</text>
      <text class="lb" transform="rotate(-90 1386.500 851)" x="1386.500" y="851" textLength="39" lengthAdjust="spacingAndGlyphs">8400</text>
      <text class="lb" transform="rotate(-90 1402.500 559)" x="1402.500" y="559" textLength="47" lengthAdjust="spacingAndGlyphs">71200</text>
    </svg>
  </div>
</main>

<section class="dialog">
  <div class="d-title"><span>生成吊筋</span><span class="d-close"></span></div>
  <div class="d-body">
    <div class="d-left">
      <div class="sec">生成位置</div>
      <div class="d-row"><b class="cb on"><svg><use href="#ck"/></svg></b><span>主梁与次梁相交，主梁上</span></div>
      <div class="d-row"><b class="cb on"><svg><use href="#ck"/></svg></b><span>同截面的次梁相交，均设置</span></div>
      <div class="sec sec2">钢筋信息</div>
      <div class="field f1"><label>吊筋:</label><div class="inp">2C12</div></div>
      <div class="field f2"><label>次梁加筋:</label><div class="inp">6C8</div></div>
      <div class="sec sec3">生成方式</div>
      <div class="radios">
        <div class="rad r1"><b class="rd"></b><span>选择图元</span></div>
        <div class="rad"><b class="rd on"></b><span>选择楼层</span></div>
      </div>
    </div>
    <div class="d-right">
      <div class="sec">楼层选择</div>
      <div class="floors">
        <div class="fl"><b class="cb"></b><span>屋面层</span></div>
        <div class="fl"><b class="cb on"><svg><use href="#ck"/></svg></b><span>第6层</span></div>
        <div class="fl"><b class="cb on"><svg><use href="#ck"/></svg></b><span>第5层</span></div>
        <div class="fl"><b class="cb on"><svg><use href="#ck"/></svg></b><span>第4层</span></div>
        <div class="fl"><b class="cb on"><svg><use href="#ck"/></svg></b><span>第3层（当前楼层）</span></div>
        <div class="fl"><b class="cb"></b><span>第2层</span></div>
        <div class="fl"><b class="cb"></b><span>首层</span></div>
        <div class="f-thumb"></div>
      </div>
    </div>
  </div>
  <div class="d-foot">
    <div class="btn">查看说明</div>
    <div class="d-acts"><div class="btn pri">确定</div><div class="btn">取消</div></div>
  </div>
</section>

<div class="mark mark-ribbon"></div>
<div class="mark mark-dialog"></div>
</body>
</html>
```

FILE: styles.css
```css
* { box-sizing: border-box; }
html, body { margin: 0; padding: 0; }
body {
  position: relative;
  width: 1710px;
  height: 833px;
  overflow: hidden;
  display: flex;
  flex-direction: column;
  background: #f6f6f6;
  color: #333;
  font: 12px/18px "Open Sans", "Noto Sans CJK SC", sans-serif;
  --acc: #2b7de9;
}
i, em, b { font-style: normal; font-weight: normal; }
.sprite { position: absolute; width: 0; height: 0; }

/* icon sprite paints */
symbol * { fill: none; stroke: currentColor; stroke-width: 1; }
symbol .a { stroke: var(--acc); }
symbol .w { stroke-width: 1.6; }
symbol .af { fill: var(--acc); stroke: var(--acc); }
symbol .af.n { stroke: none; }
symbol .afl { fill: #bcd6f7; stroke: currentColor; }
symbol .afs { fill: #d6e6fb; stroke: var(--acc); stroke-width: 1.3; }
symbol .r { stroke: #e02020; stroke-width: 1.3; }
symbol .h { stroke: #c4c4c4; stroke-width: 3; }
symbol .d { stroke: #5c6470; stroke-width: 2.4; }
symbol .d1 { fill: #fff; stroke: #5c6470; stroke-width: 1.6; }
symbol .d2 { stroke-width: 2; }
symbol .d3 { stroke-width: 2; }
.ckp { stroke: #fff; stroke-width: 2; }
.ic { width: 16px; height: 16px; flex: none; color: #4e5764; }

/* top tabs */
.tabbar { height: 14px; flex: none; display: flex; background: #fff; overflow: hidden; padding-right: 16px; }
.tabs { display: flex; margin-left: -20px; height: 18px; margin-top: -5px; }
.tab { padding: 0 13px; line-height: 20px; color: #3c3c3c; white-space: nowrap; }
.tab-long { letter-spacing: -.3px; }
.tab.active { background: #2b8ff0; color: #fff; border-radius: 10px; }
.search-top {
  margin-left: auto; width: 320px; height: 22px; margin-top: -11px;
  border: 1px solid #ddd; border-radius: 4px; padding: 5px 4px 0;
  display: flex; justify-content: space-between; align-items: flex-start; line-height: 18px; color: #333;
}
.search-top .mag { width: 12px; height: 12px; color: #aaa; margin: 3px 3px 0; }
.user { display: flex; margin-left: 8px; width: 40px; gap: 2px; white-space: nowrap; }
.user span { display: block; margin-top: -5px; }
.avatar { width: 13px; height: 11px; flex: none; }
.av-b { fill: #4aa3c9; }
.av-r { fill: #d83a3a; }

/* ribbon */
.ribbon { height: 98px; flex: none; display: flex; background: #fff; border-top: 1px solid #eee; border-bottom: 2px solid #dcdcdc; }
.grp { height: 92px; margin-top: 1px; padding-top: 1.5px; border-right: 1px solid #d8d8d8; display: flex; flex-direction: column; flex: none; }
.cols { display: grid; grid-auto-flow: column; grid-template-rows: repeat(3, 23px); height: 69px; }
.it { display: flex; align-items: center; gap: 3px; height: 23px; white-space: nowrap; }
.it span, .tb span, .d-row span, .fl span, .rad span, .combo span { padding-top: 2px; }
.big { grid-row: span 3; display: flex; flex-direction: column; align-items: center; }
.off { color: #bcbcbc; --acc: #c6c6c6; }
.off .ic { color: #c6c6c6; }
.ar { display: inline-block; width: 0; height: 0; border: 3.5px solid transparent; border-bottom: 0; border-top: 4px solid #8a8a8a; margin-left: 4px; flex: none; }
.ar-sm { border-width: 3px; border-bottom: 0; border-top: 3px solid #8a8a8a; margin-left: 4px; }
.glabel { height: 22px; line-height: 26px; text-align: center; color: #444; white-space: nowrap; }
.glabel.left { text-align: left; }
.glabel .ar { margin-left: 6px; vertical-align: 2px; }

.g0 { width: 113px; }
.g0 .cols { grid-template-columns: 31px auto; }
.g1 { width: 193px; padding-left: 8px; }
.g1 .cols { grid-template-columns: 79px auto; }
.g2 { width: 277px; padding-left: 9.500px; }
.g2 .cols { grid-template-columns: 67px 111.500px auto; }
.g3 { width: 237px; padding-left: 9px; }
.g3 .cols { grid-template-columns: 53px 54px 63px auto; }
.g4 { width: 66px; padding-left: 8px; }
.g4 .cols { grid-template-columns: 32px auto; }
.g4 .glabel { margin-left: -8px; }
.g5 { width: 250px; padding-left: 11px; }
.g5 .cols { grid-template-columns: 44.600px 102px auto; }
.g5 .big { width: 36px; }
.bigic { width: 29px; height: 31px; margin-top: 3.500px; flex: none; --acc: #c6c6c6; color: #c6c6c6; }
.g5 .big span { margin-top: 5px; }
.g6 { width: 78px; }
.g6 .cols { grid-template-columns: 64px; }
.big-smart .bigic { width: 32px; --acc: #2b7de9; }
.big-smart span { margin-top: 3px; color: #333; }
.big-smart .ar { margin: 5px 0 0; }
.g6 .glabel { width: 64px; }
.g7 { flex: 1; padding-left: 9.600px; border-right: 0; }
.g7 .cols { grid-template-columns: 86.400px 102px 88px 101px auto; }
.g7-label { width: 473px; }
.pad { padding-left: 3.600px; }
.pad-cb { padding-left: 1px; }
.sel-bg { display: flex; align-items: center; gap: 3px; width: 76px; height: 18px; margin-left: -3.600px; padding-left: 3.600px; background: #c3d9f1; border-radius: 2px; }

.cb { display: block; width: 14px; height: 14px; border: 1px solid #8a8a8a; border-radius: 2px; background: #fff; flex: none; }
.cb svg { display: block; width: 14px; height: 14px; margin: -1px; }
.cb.on { background: #2b7de9; border-color: #2b7de9; }
.rd { display: block; width: 14px; height: 14px; border: 1px solid #9a9a9a; border-radius: 50%; background: #fff; flex: none; }
.rd.on { background: radial-gradient(circle, #2b7de9 0 3.500px, #fff 4px); border-color: #a8c6ee; }

/* combos */
.subbar { height: 27px; flex: none; display: flex; gap: 5.500px; padding-top: 3px; background: #f0f0f0; }
.combo { height: 21px; padding: 0 6px 0 4px; display: flex; align-items: center; justify-content: space-between; background: #fff; border-radius: 3px 3px 0 0; }
.ar-dk { border-top-color: #555; border-width: 3px; border-bottom: 0; border-top-width: 3px; }
.c1 { width: 80px; }
.c2 { width: 97px; }
.c3 { width: 96.500px; }
.c4 { width: 98px; }

/* main */
.main { flex: 1; display: flex; min-height: 0; }
.nav { width: 17px; flex: none; overflow: hidden; background: #fff; display: flex; flex-direction: column; }
.n-strip { height: 11px; line-height: 12px; padding-left: 6px; color: #999; background: #e6e6e6; flex: none; }
.n-tab { height: 23px; background: #f5f5f5; border-bottom: 1px solid #ddd; flex: none; }
.n-tool { height: 28px; border-bottom: 1px solid #ddd; flex: none; }
.n-a { height: 29.700px; padding-top: 8px; flex: none; }
.dot { width: 18px; height: 18px; margin-left: -7px; border-radius: 50%; background: #f0b95b; color: #7a5a20; font-size: 11px; line-height: 18px; text-align: right; padding-right: 1px; }
.band { height: 25px; margin-top: 3px; background: #ededed; flex: none; }
.band-sel { background: #cfe4fb; }
.n-b { height: 112px; padding-top: 92px; white-space: nowrap; flex: none; }
.n-b span { margin-left: -6px; display: block; }
.n-c { height: 55px; flex: none; }
.n-d { height: 26px; padding-top: 5px; flex: none; }

.panels { width: 286px; margin-left: 5px; flex: none; display: flex; flex-direction: column; gap: 5px; }
.panel { background: #fff; overflow: hidden; box-shadow: inset 1px 0 #e2e2e2, inset -1px 0 #e2e2e2; }
.panel-a { height: 396px; }
.panel-b { height: 289px; }
.p-strip { height: 12px; line-height: 12px; text-align: right; padding-right: 4px; color: #999; background: #e4e4e4; font-size: 13px; }
.p-tabs { height: 22px; display: flex; border-bottom: 1px solid #ddd; }
.p-tab { width: 65.500px; line-height: 21px; text-align: center; background: #e2e2e2; color: #8a8a8a; font-weight: 700; border: 1px solid #c8c8c8; border-bottom: 0; }
.p-tab.on { background: #f5f5f5; color: #333; }
.p-tools { height: 28px; display: grid; grid-template-columns: 67px 58px 54px 90px 10px; align-items: center; padding-left: 5px; border-bottom: 1px solid #ddd; }
.tb { display: flex; align-items: center; gap: 3px; white-space: nowrap; }
.more { width: 10px; height: 19px; font-size: 8px; line-height: 18px; text-align: center; border: 1px solid #e4e4e4; border-radius: 3px; color: #666; overflow: hidden; letter-spacing: -1px; }
.p-search { height: 20px; padding: 0 4px 0 3px; display: flex; align-items: center; justify-content: space-between; border-bottom: 1px solid #ddd; color: #aaa; }
.p-search .mag { width: 12px; height: 12px; color: #aaa; margin-right: 3px; }
.p-list { position: relative; padding-top: 4px; height: 314px; }
.row { height: 21px; margin: 0 0 3px 61px; width: 168px; padding-left: 4px; line-height: 22px; border-radius: 2px; white-space: pre; }
.row.sel { background: #c2d8f0; }
.row em { font-size: 13px; }
.thumb { position: absolute; right: 3px; top: 26px; width: 8px; height: 67px; border-radius: 4px; background: #ccc; }

.p-tablewrap { display: flex; }
.props { width: 270px; flex: none; table-layout: fixed; border-collapse: collapse; }
.c-i { width: 22.500px; }
.c-n { width: 100.800px; }
.c-v { width: 106.400px; }
.c-x { width: 40.300px; }
.props th, .props td { height: 21px; padding: 1px 0 0 3.500px; border: 1px solid #dcdcdc; font-weight: 400; line-height: 18px; white-space: nowrap; overflow: hidden; }
.props th { text-align: center; padding: 0; color: #444; }
.props .idx { padding: 0; text-align: center; background: #f2f2f2; font-size: 13px; color: #444; }
.props .hv { background: #7db8f7; color: #fff; }
.props .bl { color: #2f6fe0; }
.props .val { padding-left: 4px; }
.props .focus { box-shadow: inset 0 0 0 2px #777; }
.props td .cb { margin: 0 auto; position: relative; left: -1.500px; }
.props td:last-child { padding: 0; }
.rb { font-size: 9px; vertical-align: 3px; line-height: 1; }
.track { flex: 1; padding: 15px 0 0 5px; }
.track-thumb { width: 8px; height: 260px; background: #ccc; border-radius: 4px; }

.split { width: 5px; flex: none; }
.handle { width: 4px; height: 98px; margin: 373px 0 0 1px; background: #66707a; }

.canvas { flex: 1; background: #000; overflow: hidden; }
.cad { display: block; }

/* cad paints */
.bub { fill: none; stroke: #0b6e0b; stroke-width: 1; }
.ax-g { fill: none; stroke: #0b6e0b; stroke-width: 1; }
.ax-r { fill: none; stroke: #e00000; stroke-width: 1; }
.ax-d { fill: none; stroke: #a00000; stroke-width: 1; }
.outline { fill: none; stroke: #8c8c8c; stroke-width: 3; }
.bld { fill: #676767; }
.beam { fill: #676767; stroke: #6b5f10; stroke-width: 2; }
.blk { fill: #000; }
.blue { fill: #3232c8; stroke: #666; stroke-width: 3; }
.dk { fill: none; stroke: #555; stroke-width: 2; }
.ylw { fill: none; stroke: #e8d060; stroke-width: 2; }
.ylw.thin { stroke: #f4e040; stroke-width: 1; }
.gr { fill: none; stroke: #22cc2a; stroke-width: 2.800; }
.gr.w4 { stroke-width: 4; }
.gr.w2 { stroke-width: 2.400; }
.org { fill: none; stroke: #e0a020; stroke-width: 1; }
.pl { fill: none; stroke: #7020d0; stroke-width: 1; }
.bl { fill: none; stroke: #3a3ae0; stroke-width: 1.500; }
.olv { fill: none; stroke: #a8a020; stroke-width: 1; }
.pur { fill: #8a0be0; }
.m-r { fill: #f00; }
.m-ring { fill: none; stroke: #f00; stroke-width: 2; }
.m-w { fill: none; stroke: #fff; stroke-width: 1.600; }
.m-t { fill: none; stroke: #bbb; stroke-width: 1.200; stroke-dasharray: 1 1; }
.lb { fill: #fff; font: 21px "Liberation Sans", sans-serif; text-anchor: middle; }

/* dialog */
.dialog {
  position: absolute; left: 551px; top: 333px; width: 562px; height: 303px;
  display: flex; flex-direction: column;
  background: linear-gradient(100deg, #e6e6e6 0, #ececec 30%, #e9e9e9 60%, #eeeeee 100%);
  border: 1px solid #c4c4c4; box-shadow: 0 0 14px rgba(0, 0, 0, .35); color: #444;
}
.d-title { height: 38px; padding: 0 12px 0 11px; display: flex; align-items: center; justify-content: space-between; font-size: 14px; flex: none; }
.d-close { width: 11px; height: 11px; margin-right: 1px; background: linear-gradient(45deg, transparent 46%, #777 46% 54%, transparent 54%), linear-gradient(-45deg, transparent 46%, #777 46% 54%, transparent 54%); }
.d-body { height: 211px; flex: none; display: flex; gap: 6.500px; padding: 0 10px 0 11px; }
.d-left { width: 276px; flex: none; }
.d-right { flex: 1; }
.sec { height: 20px; padding-top: 2px; display: flex; align-items: center; gap: 3px; white-space: nowrap; }
.sec::after { content: ""; flex: 1; height: 1px; margin-top: -2px; background: #ccc; }
.sec2 { margin-top: 2px; }
.sec3 { margin-top: 5px; }
.d-row { height: 23px; display: flex; align-items: center; gap: 3.500px; padding-left: 1px; }
.d-row:nth-child(2) { height: 24px; }
.field { display: flex; align-items: center; height: 25px; }
.f1 { margin-top: 4px; }
.f2 { margin-top: 7px; }
.field label { width: 57.700px; flex: none; padding-top: 2px; }
.inp { flex: 1; height: 25px; padding-left: 3px; line-height: 24px; background: #fff; border: 1px solid #ddd; border-radius: 3px; color: #333; }
.radios { display: flex; height: 22px; margin-top: 1px; padding-left: 1px; }
.rad { display: flex; align-items: center; gap: 4px; }
.r1 { width: 141.500px; }
.floors { position: relative; height: 169px; margin: 7px 1px 0 1px; background: #fff; padding-left: 64px; }
.fl { height: 24px; display: flex; align-items: center; gap: 7px; }
.f-thumb { position: absolute; left: 244px; top: 43px; width: 7.500px; height: 98px; border-radius: 4px; background: #c8c8c8; }
.d-foot { flex: 1; margin: 0 10px 0 11px; padding-top: 14px; border-top: 1px solid #ccc; display: flex; justify-content: space-between; align-items: flex-start; }
.d-acts { display: flex; gap: 16.500px; }
.btn { width: 80px; height: 25px; line-height: 25px; text-align: center; background: #fff; border: 1px solid #d4d4d4; border-radius: 3px; color: #444; }
.btn.pri { background: #2e80e2; border-color: #2e80e2; color: #fff; }

/* red callouts painted on the screenshot */
.mark { position: absolute; border: 3px solid #f01414; border-radius: 2px; pointer-events: none; }
.mark-ribbon { left: 1488px; top: 24px; width: 104px; height: 38px; }
.mark-dialog { left: 534px; top: 487px; width: 331px; height: 49px; }
```
